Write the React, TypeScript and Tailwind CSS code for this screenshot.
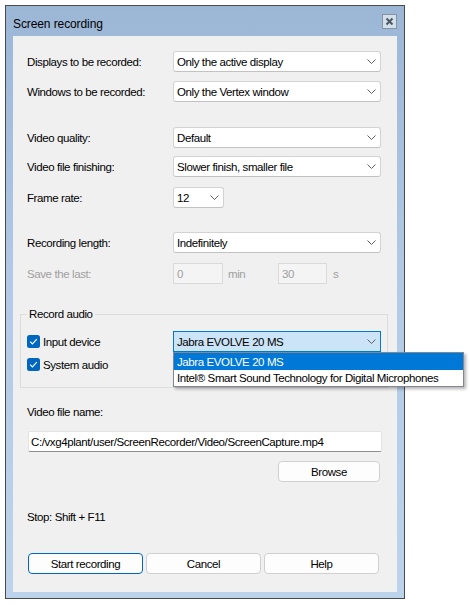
const font = "font-['Liberation_Sans',Arial,sans-serif] text-[11.5px] tracking-[-0.4px] leading-[14px]";

function Chevron() {
  return (
    <svg width="9" height="5" viewBox="0 0 9 5" className="shrink-0">
      <polyline points="0.5,0.5 4.5,4.5 8.5,0.5" fill="none" stroke="#5f5f5f" strokeWidth="1" />
    </svg>
  );
}

function Combo({ value, width = 'w-[208px]' }: { value: string; width?: string }) {
  return (
    <div className={`${width} h-[21px] flex items-center justify-between pl-[3px] pr-[4px] bg-white border border-[#d3d3d3] border-b-[#c2c2c2] rounded-[3px] text-black`}>
      <span>{value}</span>
      <Chevron />
    </div>
  );
}

function Row({ label, children, className = '' }: { label: string; children: React.ReactNode; className?: string }) {
  return (
    <div className={`flex items-center h-[21px] pl-[14px] ${className}`}>
      <span className="w-[146px] text-black">{label}</span>
      {children}
    </div>
  );
}

function Checkbox({ label }: { label: string }) {
  return (
    <div className="flex items-center gap-[3px] w-[146px]">
      <svg width="13" height="13" viewBox="0 0 13 13" className="shrink-0">
        <rect x="0" y="0" width="13" height="13" rx="2.5" fill="#0067c0" />
        <path d="M3.2 6.6 L5.4 8.8 L9.8 4.2" fill="none" stroke="#fff" strokeWidth="1.2" />
      </svg>
      <span className="text-black">{label}</span>
    </div>
  );
}

function Button({ label, primary = false, width = 'w-[115px]' }: { label: string; primary?: boolean; width?: string }) {
  return (
    <button
      className={`${width} h-[21px] flex items-center justify-center rounded-[4px] bg-[#fdfdfd] text-black border ${
        primary ? 'border-[#0067c0]' : 'border-[#d0d0d0]'
      }`}
    >
      {label}
    </button>
  );
}

export default function App() {
  return (
    <div className={`w-[470px] h-[605px] bg-white pt-[5px] pl-[5px] ${font}`}>
      <div className="w-[400px] h-[594px] border border-[#4a4a4a] bg-gradient-to-b from-[#9cb6d6] via-[#b3cbe6] to-[#bcd3eb] flex flex-col px-[7px] pb-[6px]">
        {/* title bar */}
        <div className="h-[30px] flex items-start justify-between">
          <span className="mt-[11px] text-[12px] tracking-[-0.1px] text-black">Screen recording</span>
          <svg width="15" height="15" viewBox="0 0 15 15" className="mt-[8px]">
            <rect x="0.5" y="0.5" width="14" height="14" fill="#d3dfeb" stroke="#8593a3" />
            <path d="M4.5 4.5 L10.5 10.5 M10.5 4.5 L4.5 10.5" stroke="#4e5862" strokeWidth="2" />
          </svg>
        </div>

        {/* client area */}
        <div className="flex-1 bg-[#f0f0f0] flex flex-col">
          <Row label="Displays to be recorded:" className="mt-[15px]">
            <Combo value="Only the active display" />
          </Row>
          <Row label="Windows to be recorded:" className="mt-[9px]">
            <Combo value="Only the Vertex window" />
          </Row>
          <Row label="Video quality:" className="mt-[25px]">
            <Combo value="Default" />
          </Row>
          <Row label="Video file finishing:" className="mt-[8px]">
            <Combo value="Slower finish, smaller file" />
          </Row>
          <Row label="Frame rate:" className="mt-[10px]">
            <Combo value="12" width="w-[51px]" />
          </Row>
          <Row label="Recording length:" className="mt-[24px]">
            <Combo value="Indefinitely" />
          </Row>
          <div className="flex items-center h-[21px] pl-[14px] mt-[10px] text-[#a0a0a0]">
            <span className="w-[146px]">Save the last:</span>
            <div className="w-[50px] h-[21px] flex items-center pl-[3px] border border-[#d9d9d9] bg-[#f4f4f4]">0</div>
            <span className="ml-[5px] w-[50px]">min</span>
            <div className="w-[49px] h-[21px] flex items-center pl-[3px] border border-[#d9d9d9] bg-[#f4f4f4]">30</div>
            <span className="ml-[6px]">s</span>
          </div>

          {/* audio group */}
          <div className="relative ml-[7px] mt-[30px] w-[368px] h-[74px] border border-[#dcdcdc] pl-[6px] pt-[16px]">
            <span className="absolute top-[-8px] left-[6px] px-[2px] bg-[#f0f0f0] text-black">Record audio</span>
            <div className="flex items-center h-[21px]">
              <Checkbox label="Input device" />
              <div className="relative">
                <div className="w-[208px] h-[21px] flex items-center justify-between pl-[3px] pr-[4px] bg-[#cce4f7] border border-[#0078d7] text-black">
                  <span>Jabra EVOLVE 20 MS</span>
                  <Chevron />
                </div>
                {/* open list */}
                <div className="absolute left-0 top-[21px] z-10 w-[291px] h-[35px] bg-white border border-[#828790] shadow-[2px_2px_3px_rgba(0,0,0,0.3)] flex flex-col">
                  <div className="h-[17px] flex items-center pl-[3px] bg-[#0078d7] text-white">Jabra EVOLVE 20 MS</div>
                  <div className="h-[16px] flex items-center pl-[3px] text-black">Intel® Smart Sound Technology for Digital Microphones</div>
                </div>
              </div>
            </div>
            <div className="flex items-center h-[21px] mt-[2px]">
              <Checkbox label="System audio" />
            </div>
          </div>

          <span className="ml-[14px] mt-[17px] text-black">Video file name:</span>
          <div className="ml-[15px] mt-[12px] w-[354px] h-[21px] flex items-center pl-[2px] bg-white border border-[#e3e3e3] border-b-[#8f8f8f] rounded-[2px] text-black">
            C:/vxg4plant/user/ScreenRecorder/Video/ScreenCapture.mp4
          </div>
          <div className="flex justify-end mr-[17px] mt-[9px]">
            <Button label="Browse" width="w-[102px]" />
          </div>

          <span className="ml-[14px] mt-[28px] text-black">Stop: Shift + F11</span>

          <div className="flex gap-[3px] ml-[15px] mt-[29px]">
            <Button label="Start recording" primary />
            <Button label="Cancel" />
            <Button label="Help" />
          </div>
        </div>
      </div>
    </div>
  );
}
